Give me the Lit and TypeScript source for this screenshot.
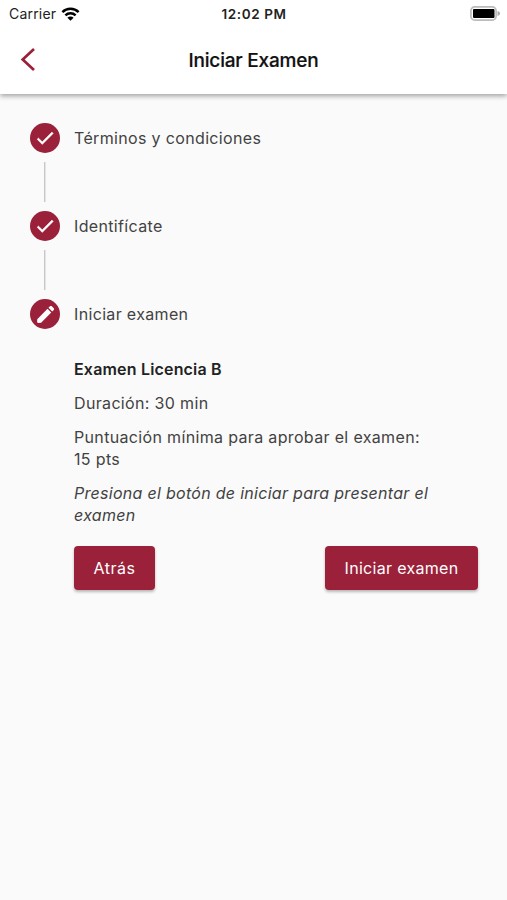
import { LitElement, html, css } from "lit";
import { customElement, property } from "lit/decorators.js";

const CHECK = "M9 16.17 4.83 12l-1.42 1.41L9 19 21 7l-1.41-1.41z";
const EDIT =
  "M2.6 17.4 2.4 20.3c0 .8.6 1.4 1.4 1.3l3.2-.3L18.6 9.7l-4.3-4.3zM21.4 6.9c.6-.6.6-1.5 0-2.1l-2.2-2.2c-.6-.6-1.5-.6-2.1 0l-1.7 1.7 4.3 4.3z";

@customElement("exam-step")
export class ExamStep extends LitElement {
  @property() state = "done";
  static styles = css`
    :host { display: flex; align-items: center; gap: 14px; height: 30px; }
    .dot { width: 30px; height: 30px; border-radius: 50%; background: #9b2039; display: flex; align-items: center; justify-content: center; }
    svg { width: 22px; height: 22px; fill: #fff; stroke: #fff; stroke-width: 0.5; display: block; }
    .current { width: 21px; height: 21px; stroke: none; }
    .label { white-space: nowrap; }
  `;
  render() {
    const done = this.state === "done";
    return html`
      <span class="dot"><svg class=${this.state} viewBox="0 0 24 24"><path d=${done ? CHECK : EDIT}></path></svg></span>
      <span class="label"><slot></slot></span>
    `;
  }
}

@customElement("app-root")
export class AppRoot extends LitElement {
  static styles = css`
    :host { display: flex; flex-direction: column; height: 900px; background: #fafafa; font-family: Inter, "Noto Sans", sans-serif; font-size: 16px; line-height: 22px; letter-spacing: 0.34px; color: #424242; }
    header { height: 94px; background: #fff; box-shadow: 0 2px 5px rgba(0, 0, 0, 0.36); }
    .status { display: grid; grid-template-columns: 1fr auto 1fr; align-items: center; height: 27px; padding: 0 6px 0 9px; font-size: 14px; color: #222; }
    .carrier { display: flex; align-items: center; gap: 5px; letter-spacing: 0.2px; }
    .time { font-size: 13.5px; font-weight: 600; letter-spacing: 0.6px; margin-right: 2px; }
    .wifi { width: 19px; height: 14px; }
    .battery { width: 31px; height: 15px; justify-self: end; }
    .nav { display: grid; grid-template-columns: 60px 1fr 60px; align-items: center; height: 66px; }
    .back { width: 16px; height: 25px; margin: -1px 0 0 20px; }
    h1 { margin: 2px 0 0; font-size: 19px; font-weight: 500; text-align: center; color: #111; letter-spacing: -0.2px; -webkit-text-stroke: 0.2px #111; }
    main { padding: 29px 29px 0 30px; }
    .rail { width: 1.5px; height: 40px; margin: 9px 0 9px 14px; background: linear-gradient(90deg, #c8c8c8 1px, #e4e4e4 1px); width: 2px; }
    .body { margin: 29px 0 0 44px; }
    p { margin: 0 0 12px; white-space: nowrap; }
    .strong { font-weight: 600; color: #222; letter-spacing: 0.18px; }
    .hint { font-style: italic; letter-spacing: 0.29px; margin-bottom: 19.5px; }
    .actions { display: flex; justify-content: space-between; }
    button { height: 44px; padding: 0; border: 0; border-radius: 4px; background: #9b2039; color: #fff; font: inherit; letter-spacing: 0.3px; box-shadow: 0 2px 3px rgba(0, 0, 0, 0.27); }
    .prev { width: 81px; letter-spacing: 0.5px; }
    .start { width: 153px; }
  `;
  render() {
    return html`
      <header>
        <div class="status">
          <span class="carrier"><span class="name">Carrier</span>
            <svg class="wifi" viewBox="0 0 18 14"><g fill="none" stroke="#000" stroke-width="2.5"><path d="M.9 5.1a11.5 11.5 0 0 1 16.2 0"></path><path d="M3.9 8.3a7.2 7.2 0 0 1 10.2 0"></path></g><path d="M9 13.8 5.9 10.8a4.4 4.4 0 0 1 6.2 0z"></path></svg>
          </span>
          <span class="time">12:02 PM</span>
          <svg class="battery" viewBox="0 0 31 15"><rect x=".9" y=".9" width="25.2" height="13.2" rx="3.8" fill="#fff" stroke="#bbb" stroke-width="1.7"></rect><rect x="3" y="3" width="21.5" height="9" rx="1"></rect><path d="M27.5 5c3.4 1 3.4 4 0 5z" fill="#aaa"></path></svg>
        </div>
        <div class="nav">
          <svg class="back" viewBox="0 0 16 25"><path d="M14 2 2.7 12.5 14 23" fill="none" stroke="#9b2039" stroke-width="2.7"></path></svg>
          <h1>Iniciar Examen</h1>
        </div>
      </header>
      <main>
        <exam-step>Términos y condiciones</exam-step>
        <div class="rail"></div>
        <exam-step>Identifícate</exam-step>
        <div class="rail"></div>
        <exam-step state="current">Iniciar examen</exam-step>
        <section class="body">
          <p class="strong">Examen Licencia B</p>
          <p>Duración: 30 min</p>
          <p>Puntuación mínima para aprobar el examen:<br />15 pts</p>
          <p class="hint">Presiona el botón de iniciar para presentar el<br />examen</p>
          <div class="actions"><button class="prev">Atrás</button><button class="start">Iniciar examen</button></div>
        </section>
      </main>
    `;
  }
}
